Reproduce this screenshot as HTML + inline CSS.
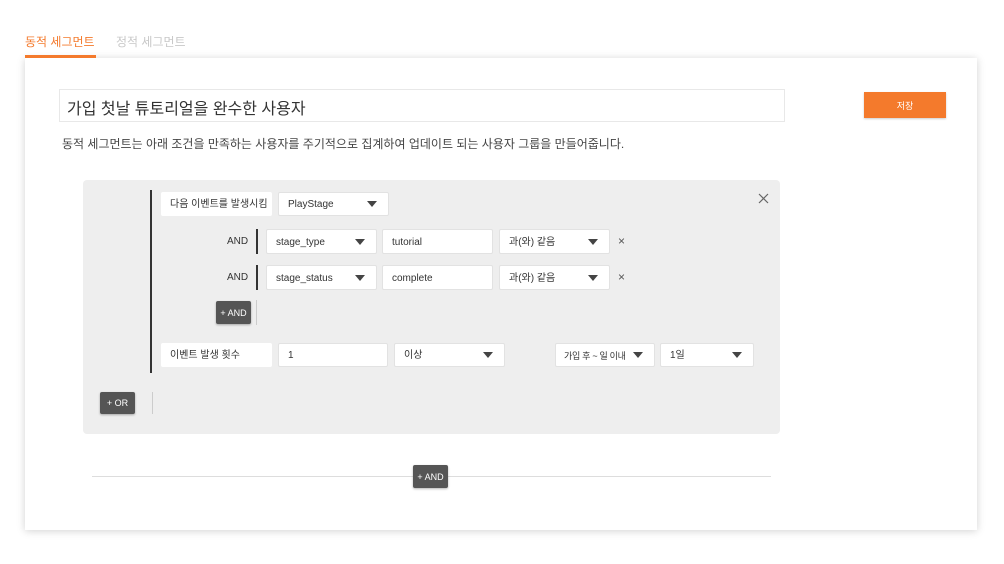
<!DOCTYPE html>
<html><head><meta charset="utf-8"><style>
*{box-sizing:border-box;margin:0;padding:0}
body{width:1004px;height:564px;background:#fff;position:relative;font-family:"Liberation Sans","Noto Sans CJK KR",sans-serif;color:#333;overflow:hidden}
.a{position:absolute}
.box{position:absolute;background:#fff;border:1px solid #e2e2e2;border-radius:2px;font-size:10px;color:#333;padding-left:9px;display:flex;align-items:center;line-height:1;padding-top:2px;white-space:nowrap}
.lbl{border:none}
.dd::after{content:"";position:absolute;right:11px;top:50%;margin-top:-3px;border-left:5px solid transparent;border-right:5px solid transparent;border-top:6px solid #444}
.btn{position:absolute;background:#555;color:#fff;font-size:9px;border-radius:2px;display:flex;align-items:center;justify-content:center;box-shadow:0 1px 2px rgba(0,0,0,.3)}
.x{position:absolute;font-size:12px;color:#555}
</style></head><body>
<div class="a" style="left:25px;top:33px;font-size:12px;color:#f47a2c">동적 세그먼트</div>
<div class="a" style="left:116px;top:33px;font-size:12px;color:#c8c8c8">정적 세그먼트</div>
<div class="a" style="left:25px;top:58px;width:952px;height:472px;background:#fff;box-shadow:0 1px 8px rgba(0,0,0,.18)"></div>
<div class="a" style="left:25px;top:55px;width:71px;height:3px;background:#f47a2c"></div>
<div class="a" style="left:59px;top:89px;width:726px;height:33px;border:1px solid #e8e8e8;font-size:16px;color:#333;padding:5px 0 0 7px">가입 첫날 튜토리얼을 완수한 사용자</div>
<div class="a" style="left:864px;top:92px;width:82px;height:26px;background:#f47a2c;color:#fff;font-size:9px;display:flex;align-items:center;justify-content:center;box-shadow:0 1px 2px rgba(0,0,0,.2)">저장</div>
<div class="a" style="left:62px;top:135px;font-size:12px;color:#444">동적 세그먼트는 아래 조건을 만족하는 사용자를 주기적으로 집계하여 업데이트 되는 사용자 그룹을 만들어줍니다.</div>
<div class="a" style="left:83px;top:180px;width:697px;height:254px;background:#eee;border-radius:4px"></div>
<div class="a" style="left:150px;top:190px;width:2px;height:183px;background:#333"></div>
<svg class="a" style="left:758px;top:193px" width="11" height="11"><path d="M1 1L10 10M10 1L1 10" stroke="#666" stroke-width="1.2"/></svg>
<div class="box lbl" style="left:161px;top:192px;width:111px;height:24px">다음 이벤트를 발생시킴</div>
<div class="box dd" style="left:278px;top:192px;width:111px;height:24px">PlayStage</div>

<div class="a" style="left:227px;top:236px;font-size:10px">AND</div>
<div class="a" style="left:256px;top:229px;width:2px;height:25px;background:#333"></div>
<div class="box dd" style="left:266px;top:229px;width:111px;height:25px">stage_type</div>
<div class="box" style="left:382px;top:229px;width:111px;height:25px">tutorial</div>
<div class="box dd" style="left:499px;top:229px;width:111px;height:25px">과(와) 같음</div>
<div class="x" style="left:618px;top:234px">×</div>

<div class="a" style="left:227px;top:272px;font-size:10px">AND</div>
<div class="a" style="left:256px;top:265px;width:2px;height:25px;background:#333"></div>
<div class="box dd" style="left:266px;top:265px;width:111px;height:25px">stage_status</div>
<div class="box" style="left:382px;top:265px;width:111px;height:25px">complete</div>
<div class="box dd" style="left:499px;top:265px;width:111px;height:25px">과(와) 같음</div>
<div class="x" style="left:618px;top:270px">×</div>

<div class="btn" style="left:216px;top:301px;width:35px;height:23px">+ AND</div>
<div class="a" style="left:256px;top:300px;width:1px;height:25px;background:#ccc"></div>

<div class="box lbl" style="left:161px;top:343px;width:111px;height:24px">이벤트 발생 횟수</div>
<div class="box" style="left:278px;top:343px;width:110px;height:24px">1</div>
<div class="box dd" style="left:394px;top:343px;width:111px;height:24px">이상</div>
<div class="box dd" style="left:555px;top:343px;width:100px;height:24px;padding-left:8px;font-size:9px;letter-spacing:-0.3px">가입 후 ~ 일 이내</div>
<div class="box dd" style="left:660px;top:343px;width:94px;height:24px">1일</div>

<div class="btn" style="left:100px;top:392px;width:35px;height:22px">+ OR</div>
<div class="a" style="left:152px;top:392px;width:1px;height:22px;background:#ccc"></div>

<div class="a" style="left:92px;top:476px;width:679px;height:1px;background:#ddd"></div>
<div class="btn" style="left:413px;top:465px;width:35px;height:23px">+ AND</div>
</body></html>
